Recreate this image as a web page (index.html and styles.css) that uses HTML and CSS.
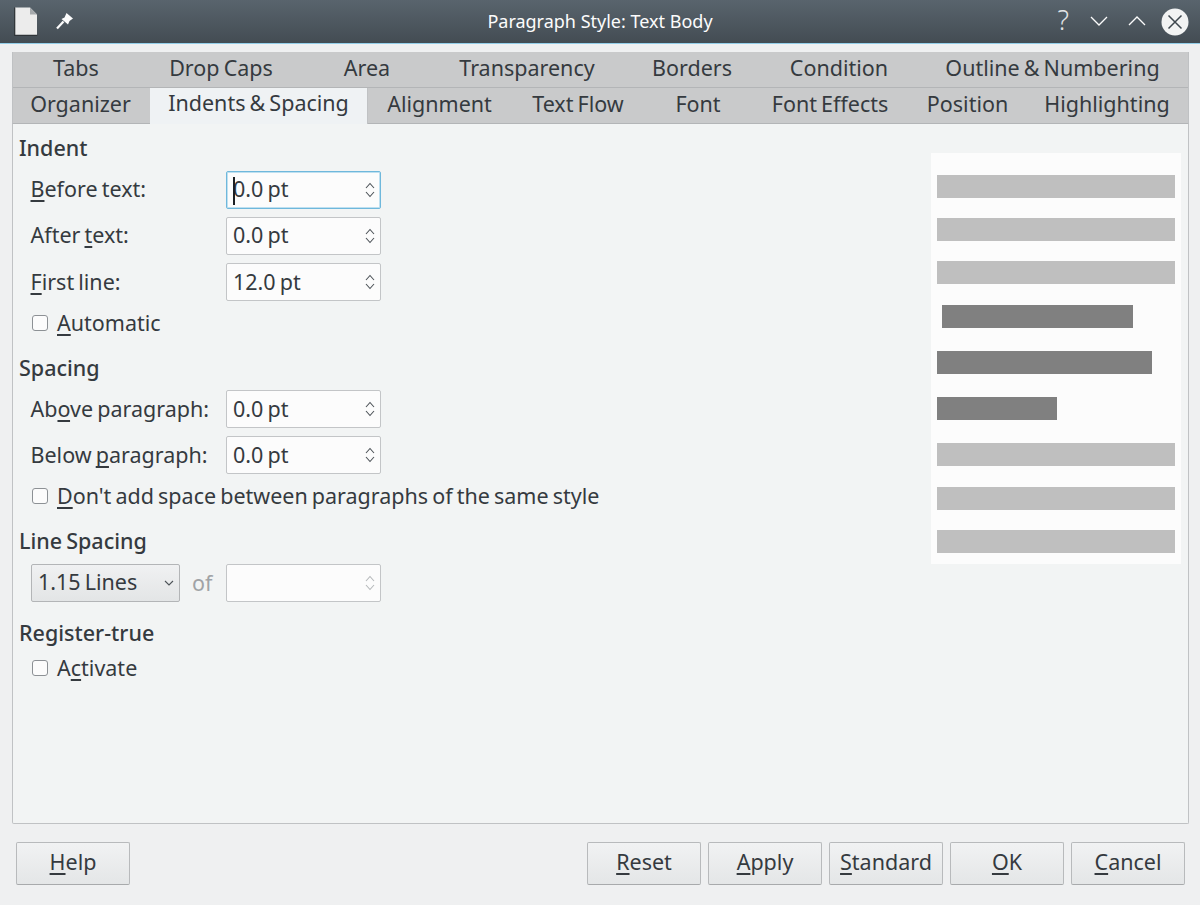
FILE: index.html
```html
<!DOCTYPE html>
<html lang="en">
<head>
<meta charset="utf-8">
<title>Paragraph Style: Text Body</title>
<link rel="stylesheet" href="styles.css">
</head>
<body>
<header class="titlebar">
  <div class="tb-left">
    <svg class="doc-icon" width="24" height="29" viewBox="0 0 24 29"><path d="M1 .5H16L23 7.500V28H1Z" fill="#ececec"/><path d="M.7 .5V28.300H23.300" fill="none" stroke="#2f3438" stroke-width="1.200"/><path d="M16 .5L23 7.500H16Z" fill="#a5a9ac"/></svg>
    <svg class="pin-icon" width="18" height="18" viewBox="0 0 18 18"><path d="M10.500 1L17 6.500 13.500 9 12 12.500 5.500 7 8.500 5.500Z" fill="#fcfcfc"/><path d="M7.500 9.500L1 16.500" stroke="#fcfcfc" stroke-width="2.200"/></svg>
  </div>
  <div class="tb-title">Paragraph Style: Text Body</div>
  <div class="tb-right">
    <span class="tb-help">?</span>
    <svg class="chev-down" width="18" height="12" viewBox="0 0 18 12"><path d="M1 2L9 10 17 2" fill="none" stroke="#fcfcfc" stroke-width="1.300"/></svg>
    <svg class="chev-up" width="18" height="12" viewBox="0 0 18 12"><path d="M1 10L9 2 17 10" fill="none" stroke="#fcfcfc" stroke-width="1.300"/></svg>
    <svg width="28" height="28" viewBox="0 0 28 28"><circle cx="14" cy="14" r="13.500" fill="#f2f3f3"/><path d="M7.500 7.500L20.500 20.500M20.500 7.500L7.500 20.500" stroke="#3e474e" stroke-width="1.500"/></svg>
  </div>
</header>
<main class="dialog">
  <nav class="tabs">
    <div class="tab-row row-one">
      <span class="tab">Tabs</span><span class="tab">Drop Caps</span><span class="tab">Area</span><span class="tab">Transparency</span><span class="tab">Borders</span><span class="tab">Condition</span><span class="tab">Outline &amp; Numbering</span>
    </div>
    <div class="tab-row row-two">
      <span class="tab">Organizer</span><span class="tab active">Indents &amp; Spacing</span><span class="tab">Alignment</span><span class="tab">Text Flow</span><span class="tab">Font</span><span class="tab">Font Effects</span><span class="tab">Position</span><span class="tab">Highlighting</span>
    </div>
  </nav>
  <section class="panel">
    <form class="form">
      <h2 class="heading">Indent</h2>
      <div class="field-row lifted">
        <label class="label"><u>B</u>efore text:</label>
        <div class="spin focus"><span class="caret"></span><span class="val">0.0 pt</span><svg class="updown" width="10" height="16" viewBox="0 0 10 16"><path d="M1 6L5 1.500 9 6M1 10L5 14.500 9 10" fill="none" stroke="#4d5358" stroke-width="1.100"/></svg></div>
      </div>
      <div class="field-row lifted">
        <label class="label">After <u>t</u>ext:</label>
        <div class="spin"><span class="val">0.0 pt</span><svg class="updown" width="10" height="16" viewBox="0 0 10 16"><path d="M1 6L5 1.500 9 6M1 10L5 14.500 9 10" fill="none" stroke="#4d5358" stroke-width="1.100"/></svg></div>
      </div>
      <div class="field-row">
        <label class="label"><u>F</u>irst line:</label>
        <div class="spin"><span class="val">12.0 pt</span><svg class="updown" width="10" height="16" viewBox="0 0 10 16"><path d="M1 6L5 1.500 9 6M1 10L5 14.500 9 10" fill="none" stroke="#4d5358" stroke-width="1.100"/></svg></div>
      </div>
      <div class="check-row after-field"><span class="box"></span><span><u>A</u>utomatic</span></div>

      <h2 class="heading section">Spacing</h2>
      <div class="field-row tight-top">
        <label class="label">Ab<u>o</u>ve paragraph:</label>
        <div class="spin"><span class="val">0.0 pt</span><svg class="updown" width="10" height="16" viewBox="0 0 10 16"><path d="M1 6L5 1.500 9 6M1 10L5 14.500 9 10" fill="none" stroke="#4d5358" stroke-width="1.100"/></svg></div>
      </div>
      <div class="field-row">
        <label class="label">Below <u>p</u>aragraph:</label>
        <div class="spin"><span class="val">0.0 pt</span><svg class="updown" width="10" height="16" viewBox="0 0 10 16"><path d="M1 6L5 1.500 9 6M1 10L5 14.500 9 10" fill="none" stroke="#4d5358" stroke-width="1.100"/></svg></div>
      </div>
      <div class="check-row after-field"><span class="box"></span><span><u>D</u>on't add space between paragraphs of the same style</span></div>

      <h2 class="heading section">Line Spacing</h2>
      <div class="line-row">
        <div class="select"><span class="select-text">1.15 Lines</span><svg width="10" height="6" viewBox="0 0 10 6"><path d="M1 1L5 5 9 1" fill="none" stroke="#4d5358" stroke-width="1.100"/></svg></div>
        <span class="of">of</span>
        <div class="spin disabled"><svg class="updown" width="10" height="16" viewBox="0 0 10 16"><path d="M1 6L5 1.500 9 6M1 10L5 14.500 9 10" fill="none" stroke="#b5b8ba" stroke-width="1.100"/></svg></div>
      </div>

      <h2 class="heading section-b">Register-true</h2>
      <div class="check-row tight"><span class="box"></span><span>A<u>c</u>tivate</span></div>
    </form>
    <aside class="preview">
      <div class="bar light"></div>
      <div class="bar light"></div>
      <div class="bar light"></div>
      <div class="bar dark d1"></div>
      <div class="bar dark d2"></div>
      <div class="bar dark d3"></div>
      <div class="bar light l7"></div>
      <div class="bar light l8"></div>
      <div class="bar light"></div>
    </aside>
  </section>
  <footer class="buttons">
    <button class="btn" type="button"><u>H</u>elp</button>
    <div class="btn-group">
      <button class="btn" type="button"><u>R</u>eset</button>
      <button class="btn" type="button"><u>A</u>pply</button>
      <button class="btn" type="button"><u>S</u>tandard</button>
      <button class="btn" type="button"><u>O</u>K</button>
      <button class="btn" type="button"><u>C</u>ancel</button>
    </div>
  </footer>
</main>
</body>
</html>
```

FILE: styles.css
```css
* { box-sizing: border-box; }
html, body { margin: 0; height: 905px; overflow: hidden; }
body {
  background: #eff0f1;
  color: #353a3f;
  font-family: "Noto Sans", sans-serif;
  font-size: 21.500px;
  word-spacing: -1.500px;
  line-height: 30px;
}
u { text-decoration-thickness: 2px; text-underline-offset: 3px; text-decoration-skip-ink: none; }

.titlebar {
  height: 44px;
  display: grid;
  grid-template-columns: 1fr auto 1fr;
  align-items: center;
  background: linear-gradient(#59646d, #434c53);
  border-bottom: 1px solid #93cee9;
  color: #fcfcfc;
}
.tb-left { display: flex; align-items: center; gap: 18px; padding-left: 14px; }
.pin-icon { margin-top: -2px; }
.tb-title { font-size: 18px; word-spacing: 0; line-height: 38px; margin-top: -2px; }
.tb-right { display: flex; align-items: center; justify-content: flex-end; padding-right: 11px; }
.tb-help { font-size: 27px; font-weight: 300; line-height: 30px; margin: -4px 21px 0 0; opacity: .85; }
.chev-down { margin-right: 20px; margin-top: -1px; }
.chev-up { margin-right: 15px; margin-top: -1px; }

.dialog { padding: 8px 11px 0 12px; }

.tabs { background: #c9cacb; height: 71px; border: solid #bfc1c3; border-width: 0 1px 0 1px; }
.tab-row { display: grid; height: 35px; }
.row-one { height: 36px; border-bottom: 1px solid #b3b5b7; grid-template-columns: 126px 164px 128px 192px 138px 156px 1fr; }
.row-two { grid-template-columns: 137px 218px 143px 134px 106px 158px 117px 1fr; }
.tab { text-align: center; line-height: 32px; white-space: nowrap; }
.tab.active { background: #eff2f4; line-height: 30px; height: 36px; position: relative; border-right: 1px solid #c0c2c4; }
.row-two .tab:first-child { padding-right: 2px; }

.panel {
  height: 701px;
  display: flex;
  justify-content: space-between;
  background: #f2f4f4;
  border: 1px solid #c0c2c4;
  border-top-color: #b3b5b7;
  border-radius: 0 0 2px 2px;
  padding: 9px 7px 0 6px;
}
.form { width: 362px; flex: none; }
.heading { font-size: 21.500px; font-weight: 500; line-height: 30px; margin: 0; white-space: nowrap; }
.heading.section { margin-top: 15px; }
.heading.section-b { margin-top: 16px; }
.field-row { display: flex; align-items: center; justify-content: space-between; padding-left: 11.500px; margin-top: 8px; }
.field-row.tight-top { margin-top: 7px; }
.field-row.lifted .label { margin-bottom: 2px; }
.label { white-space: nowrap; }
.spin {
  width: 155px; height: 38px; flex: none;
  display: flex; align-items: center; justify-content: space-between;
  position: relative;
  padding: 0 5px 0 6px;
  background: #fcfcfc;
  border: 1px solid #c3c5c7;
  border-radius: 2px;
}
.spin.focus { border-color: #6fb8dc; box-shadow: inset 0 0 0 1px #bfe0f0; }
.spin.disabled { justify-content: flex-end; }
.field-row.lifted .val { margin-bottom: 2px; }
.caret { position: absolute; left: 6px; top: 5px; width: 1.500px; height: 28px; background: #1c2024; }
.check-row { display: flex; align-items: center; gap: 9px; padding-left: 13px; white-space: nowrap; }
.check-row.after-field { margin-top: 7px; }
.check-row.tight { margin-top: 5px; }
.box { width: 16px; height: 16px; flex: none; background: #fcfcfc; border: 1px solid #8d9195; border-radius: 3px; }
.line-row { display: flex; align-items: center; margin-top: 8px; padding-left: 12px; }
.select {
  width: 149px; height: 38px; flex: none;
  display: flex; align-items: center; justify-content: space-between;
  padding: 0 5px 0 6px;
  background: linear-gradient(#f0f1f2, #e3e5e6);
  border: 1px solid #b3b5b7;
  border-radius: 2px;
}
.select-text { margin-bottom: 3px; }
.of { color: #a0a3a6; margin-left: 12px; width: 34px; }

.preview {
  width: 250px; height: 411px; flex: none;
  margin-top: 20px;
  padding: 22px 6px 0;
  background: #fcfcfc;
  display: flex; flex-direction: column; gap: 20.500px;
}
.bar { height: 22.500px; flex: none; }
.light { background: #bfbfbf; }
.dark { background: #808080; }
.d1 { width: 191px; margin-left: 5px; margin-top: 1px; }
.d2 { width: 215px; margin-top: 3px; }
.d3 { width: 120px; margin-top: 3px; }
.l7 { margin-top: 3px; }
.l8 { margin-top: 1px; }

.buttons { display: flex; justify-content: space-between; padding: 18px 4px 0 4px; }
.btn-group { display: flex; gap: 7px; }
.btn {
  width: 114px; height: 43px; padding: 0 0 4px;
  font: inherit; color: inherit; word-spacing: inherit;
  background: linear-gradient(#f1f2f3, #e4e6e7);
  border: 1px solid #b8babc;
  border-bottom-color: #a8aaac;
  border-radius: 2px;
}
```
